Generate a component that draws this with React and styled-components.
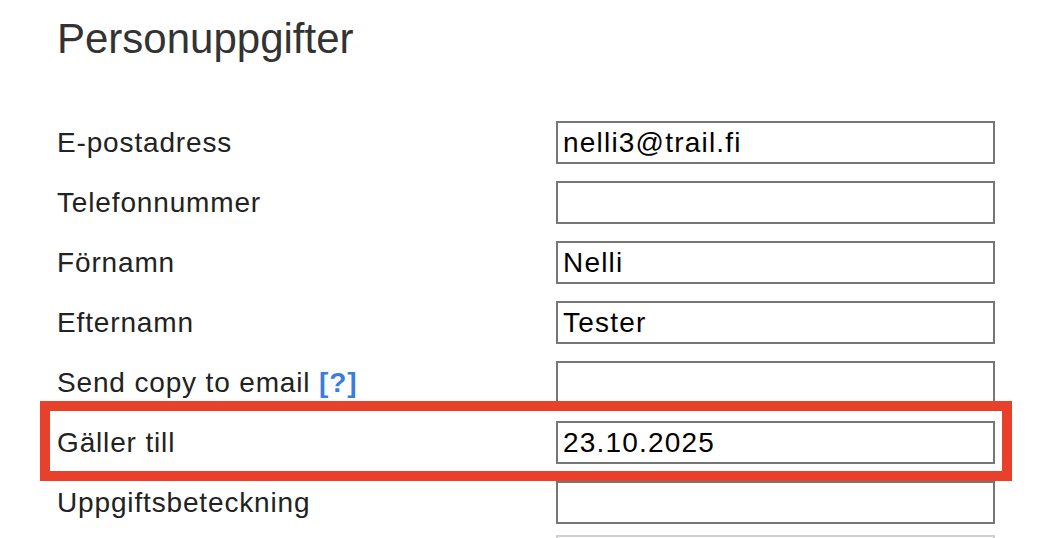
import React from 'react'
import styled, { createGlobalStyle } from 'styled-components'

const GlobalStyle = createGlobalStyle`
    body {
        margin: 0;
        background: #fff;
        font-family: "Liberation Sans", Arial, Helvetica, sans-serif;
    }
`
const Page = styled.div`
    padding: 15px 57px 0 57px;
    width: 938px;
`
const Title = styled.h1`
    margin: 0 0 48px 0;
    font-size: 42px;
    font-weight: normal;
    line-height: 48px;
    color: #333;
`
const Form = styled.div`
    display: flex;
    flex-direction: column;
`
const Row = styled.div`
    position: relative;
    display: flex;
    align-items: flex-start;
    height: 60px;
    ${p => p.$highlight && `
        &::after {
            content: '';
            position: absolute;
            top: -10px;
            bottom: -10px;
            left: -17px;
            right: -17px;
            border: 10px solid #e8402a;
            pointer-events: none;
            z-index: 2;
        }
    `}
`
const Label = styled.label`
    flex: 1;
    margin-top: 10px;
    font-size: 28px;
    letter-spacing: 0.85px;
    line-height: 43px;
    color: #222;
`
const Help = styled.span`
    color: #3b7ddd;
    font-weight: bold;
`
const Input = styled.input`
    box-sizing: border-box;
    width: 439px;
    height: 43px;
    margin-top: 10px;
    padding: 0 5px;
    border: 2px solid #767676;
    border-radius: 0;
    background: #fff;
    font-family: "Liberation Sans", Arial, Helvetica, sans-serif;
    font-size: 28px;
    letter-spacing: 1.2px;
    color: #000;
    outline: none;
`
const NextBox = styled.div`
    box-sizing: border-box;
    align-self: flex-end;
    width: 439px;
    height: 43px;
    margin-top: 4px;
    border: 2px solid #cfcfcf;
`

const fields = [
    { label: 'E-postadress', value: 'nelli3@trail.fi' },
    { label: 'Telefonnummer', value: '' },
    { label: 'Förnamn', value: 'Nelli' },
    { label: 'Efternamn', value: 'Tester' },
    { label: 'Send copy to email', value: '', help: true },
    { label: 'Gäller till', value: '23.10.2025', highlight: true },
    { label: 'Uppgiftsbeteckning', value: '' },
]

const App = () => {
    return (
        <>
            <GlobalStyle />
            <Page>
                <Title>Personuppgifter</Title>
                <Form>
                    {fields.map(f => (
                        <Row key={f.label} $highlight={f.highlight}>
                            <Label>
                                {f.label}
                                {f.help && <> <Help>[?]</Help></>}
                            </Label>
                            <Input defaultValue={f.value} />
                        </Row>
                    ))}
                    <NextBox />
                </Form>
            </Page>
        </>
    )
}

export default App
